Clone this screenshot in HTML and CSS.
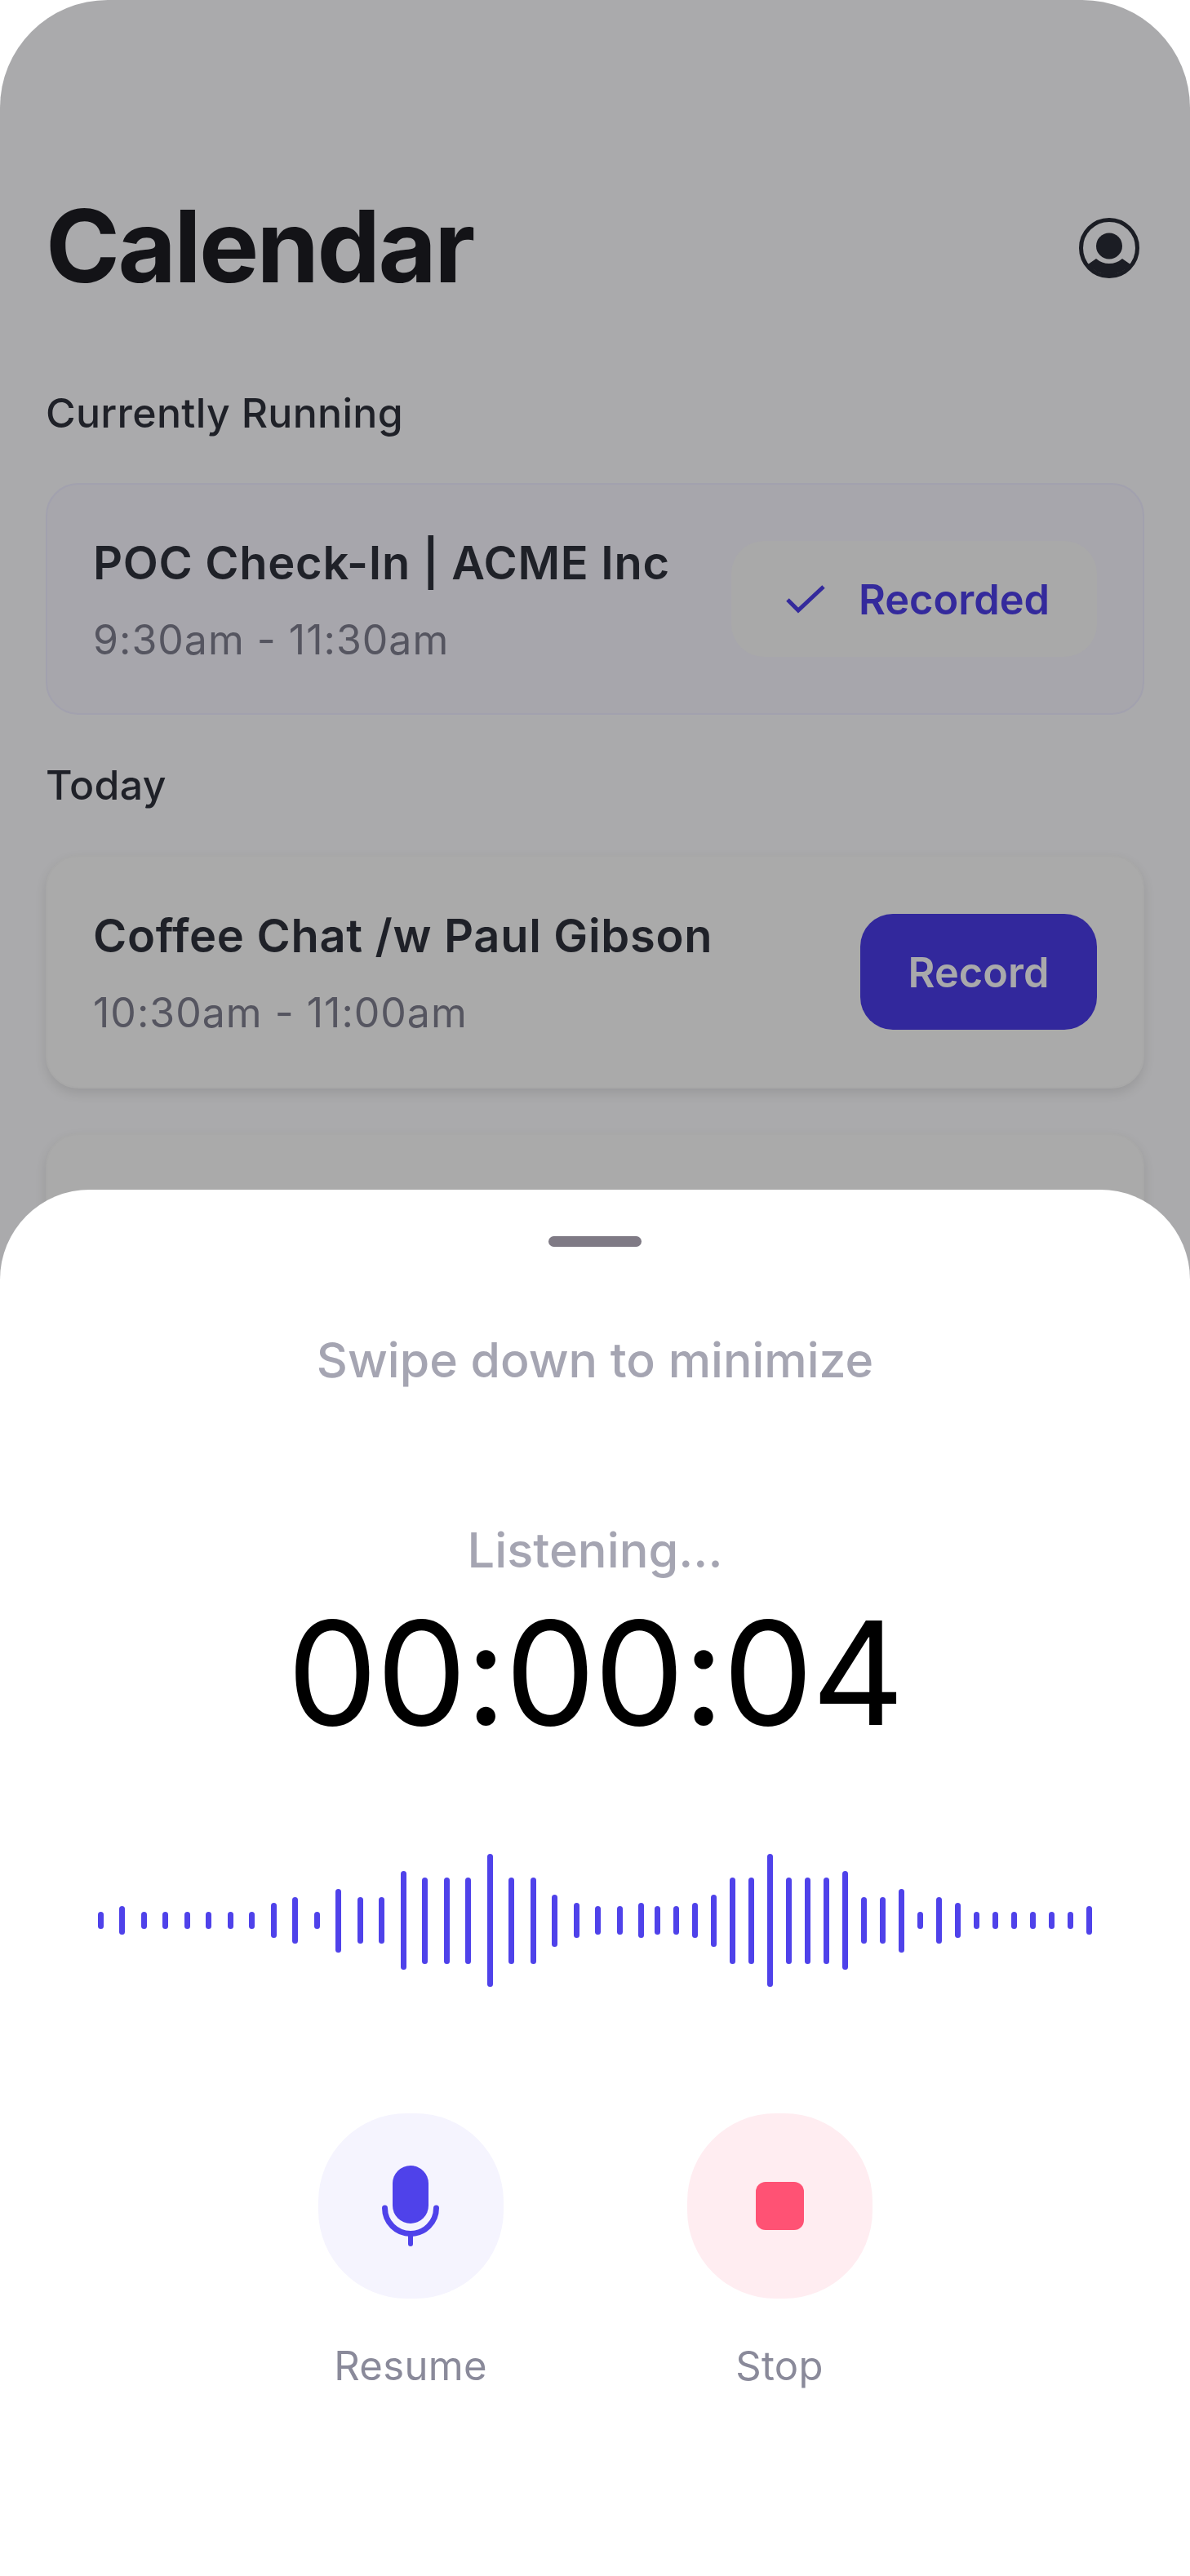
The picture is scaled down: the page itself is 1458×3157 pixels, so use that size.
FILE: index.html
```html
<!DOCTYPE html>
<html>

<head>
    <title>Calendar - Recording</title>
    <meta charset='utf-8' />
    <link rel="stylesheet" href="styles.css">
</head>

<body>
    <div class="phone">
        <div class="calendar">
            <div class="header">
                <h1>Calendar</h1>
                <svg class="avatar" width="74" height="74" viewBox="0 0 74 74">
                    <circle cx="37" cy="37" r="34.5" fill="none" stroke="#1b1d24" stroke-width="5" />
                    <circle cx="37" cy="34.5" r="16" fill="#1b1d24" />
                    <path d="M11 57 L21 50 Q28 56 37 56 Q46 56 53 50 L63 57 A33 33 0 0 1 11 57 Z" fill="#1b1d24" />
                </svg>
            </div>

            <div class="label label-first">Currently Running</div>
            <div class="card card-running">
                <div class="info">
                    <div class="name">POC Check-In | ACME Inc</div>
                    <div class="time">9:30am - 11:30am</div>
                </div>
                <div class="btn btn-done">
                    <svg width="50" height="36" viewBox="0 0 50 36">
                        <path d="M3 19 L16 32 L47 3" fill="none" stroke="#342a9c" stroke-width="5" />
                    </svg>
                    <span>Recorded</span>
                </div>
            </div>

            <div class="label">Today</div>
            <div class="card">
                <div class="info">
                    <div class="name">Coffee Chat /w Paul Gibson</div>
                    <div class="time">10:30am - 11:00am</div>
                </div>
                <div class="btn btn-record">Record</div>
            </div>
            <div class="card card-next"></div>
        </div>

        <div class="sheet">
            <div class="handle"></div>
            <div class="hint">Swipe down to minimize</div>
            <div class="status">Listening...</div>
            <div class="timer">00:00:04</div>

            <div class="wave">
                <div class="bars bars-wide">
                    <span style="height:21px"></span><span style="height:35px"></span><span style="height:21px"></span><span style="height:21px"></span><span style="height:21px"></span><span style="height:21px"></span><span style="height:21px"></span><span style="height:21px"></span><span style="height:43px"></span><span style="height:57px"></span><span style="height:21px"></span><span style="height:78px"></span><span style="height:57px"></span><span style="height:57px"></span><span style="height:121px"></span><span style="height:106px"></span><span style="height:106px"></span><span style="height:106px"></span><span style="height:163px"></span><span style="height:106px"></span><span style="height:106px"></span><span style="height:64px"></span><span style="height:43px"></span><span style="height:35px"></span><span style="height:35px"></span><span style="height:43px"></span>
                </div>
                <div class="bars bars-narrow">
                    <span style="height:35px"></span><span style="height:35px"></span><span style="height:43px"></span><span style="height:64px"></span><span style="height:106px"></span><span style="height:106px"></span><span style="height:163px"></span><span style="height:106px"></span><span style="height:106px"></span><span style="height:106px"></span><span style="height:121px"></span><span style="height:57px"></span><span style="height:57px"></span><span style="height:78px"></span><span style="height:21px"></span><span style="height:57px"></span><span style="height:43px"></span><span style="height:21px"></span><span style="height:21px"></span><span style="height:21px"></span><span style="height:21px"></span><span style="height:21px"></span><span style="height:21px"></span><span style="height:35px"></span>
                </div>
            </div>

            <div class="controls">
                <div class="control">
                    <div class="round round-resume">
                        <svg width="70" height="100" viewBox="0 0 70 100">
                            <rect x="13" y="0" width="44" height="71" rx="22" fill="#4f42ea" />
                            <path d="M3.5 52 a31.5 31.5 0 0 0 63 0" fill="none" stroke="#4f42ea" stroke-width="7" stroke-linecap="round" />
                            <path d="M35 84 V96" fill="none" stroke="#4f42ea" stroke-width="6" stroke-linecap="round" />
                        </svg>
                    </div>
                    <div class="control-name">Resume</div>
                </div>
                <div class="control">
                    <div class="round round-stop">
                        <div class="stop-mark"></div>
                    </div>
                    <div class="control-name">Stop</div>
                </div>
            </div>
        </div>
    </div>
</body>

</html>
```

FILE: styles.css
```css
* {
    box-sizing: border-box;
}

body {
    margin: 0;
    background: #fff;
    font-family: Inter, "Liberation Sans", sans-serif;
}

.phone {
    position: relative;
    width: 1458px;
    height: 3157px;
    overflow: hidden;
    background: #aaaaac;
    border-radius: 132px 132px 0 0;
}

.calendar {
    padding: 232px 56px 0;
}

.header {
    display: flex;
    justify-content: space-between;
    align-items: center;
    height: 144px;
    padding-right: 6px;
}

.header h1 {
    margin: 0 0 4px;
    font-size: 123px;
    line-height: 140px;
    font-weight: 700;
    letter-spacing: -2.6px;
    color: #131317;
}

.label {
    margin: 56px 0 56px;
    font-size: 50px;
    line-height: 60px;
    font-weight: 500;
    letter-spacing: 0.3px;
    color: #1f2128;
}

.label-first {
    margin-top: 100px;
}

.card {
    display: flex;
    justify-content: space-between;
    align-items: center;
    height: 286px;
    padding: 0 56px;
    background: #aaaaaa;
    border: 2px solid #a8a8a8;
    border-radius: 40px;
    box-shadow: 0 6px 14px rgba(0, 0, 0, 0.1);
}

.card-running {
    height: 284px;
    background: #a7a6ac;
    border-color: #a2a1ae;
    box-shadow: none;
}

.card-next {
    margin-top: 55px;
}

.name {
    font-size: 56px;
    line-height: 72px;
    font-weight: 600;
    letter-spacing: 0.7px;
    color: #1f2128;
}

.time {
    margin-top: 28px;
    font-size: 50px;
    line-height: 60px;
    letter-spacing: 1px;
    color: #555560;
}

.btn {
    display: flex;
    justify-content: center;
    align-items: center;
    height: 142px;
    border-radius: 40px;
    font-size: 50.5px;
    font-weight: 600;
}

.btn-done {
    gap: 40px;
    width: 448px;
    padding-left: 8px;
    background: #a9a9a9;
    color: #342a9c;
}

.btn-record {
    width: 290px;
    background: #32289c;
    color: #a9a9ab;
}

.sheet {
    position: absolute;
    top: 1458px;
    left: 0;
    right: 0;
    bottom: 0;
    display: flex;
    flex-direction: column;
    align-items: center;
    padding-top: 57px;
    background: #fff;
    border-radius: 110px 110px 0 0;
}

.handle {
    width: 114px;
    height: 13px;
    background: #7f7a85;
    border-radius: 7px;
}

.hint {
    margin-top: 99px;
    font-size: 59px;
    line-height: 80px;
    font-weight: 500;
    color: #a5a5b2;
}

.status {
    margin-top: 152px;
    font-size: 59.5px;
    line-height: 80px;
    font-weight: 500;
    color: #a5a5b2;
}

.timer {
    margin-top: 16px;
    font-size: 176px;
    line-height: 190px;
    letter-spacing: -2px;
    color: #000;
}

.wave {
    display: flex;
    justify-content: center;
    gap: 13px;
    height: 163px;
    margin-top: 127px;
}

.bars {
    display: flex;
    align-items: center;
}

.bars-wide {
    gap: 19.5px;
}

.bars-narrow {
    gap: 16px;
}

.bars span {
    width: 7px;
    background: #4f42ea;
    border-radius: 3.5px;
}

.controls {
    display: flex;
    gap: 225px;
    margin-top: 155px;
}

.control {
    display: flex;
    flex-direction: column;
    align-items: center;
}

.round {
    display: flex;
    justify-content: center;
    align-items: center;
    width: 227px;
    height: 227px;
    border-radius: 108px;
}

.round-resume {
    background: #f5f4fe;
}

.round-stop {
    background: #ffedf1;
}

.stop-mark {
    width: 59px;
    height: 59px;
    background: #ff5274;
    border-radius: 12px;
}

.control-name {
    margin-top: 53px;
    font-size: 49px;
    line-height: 60px;
    letter-spacing: 0.3px;
    color: #8a8a9a;
}
```
